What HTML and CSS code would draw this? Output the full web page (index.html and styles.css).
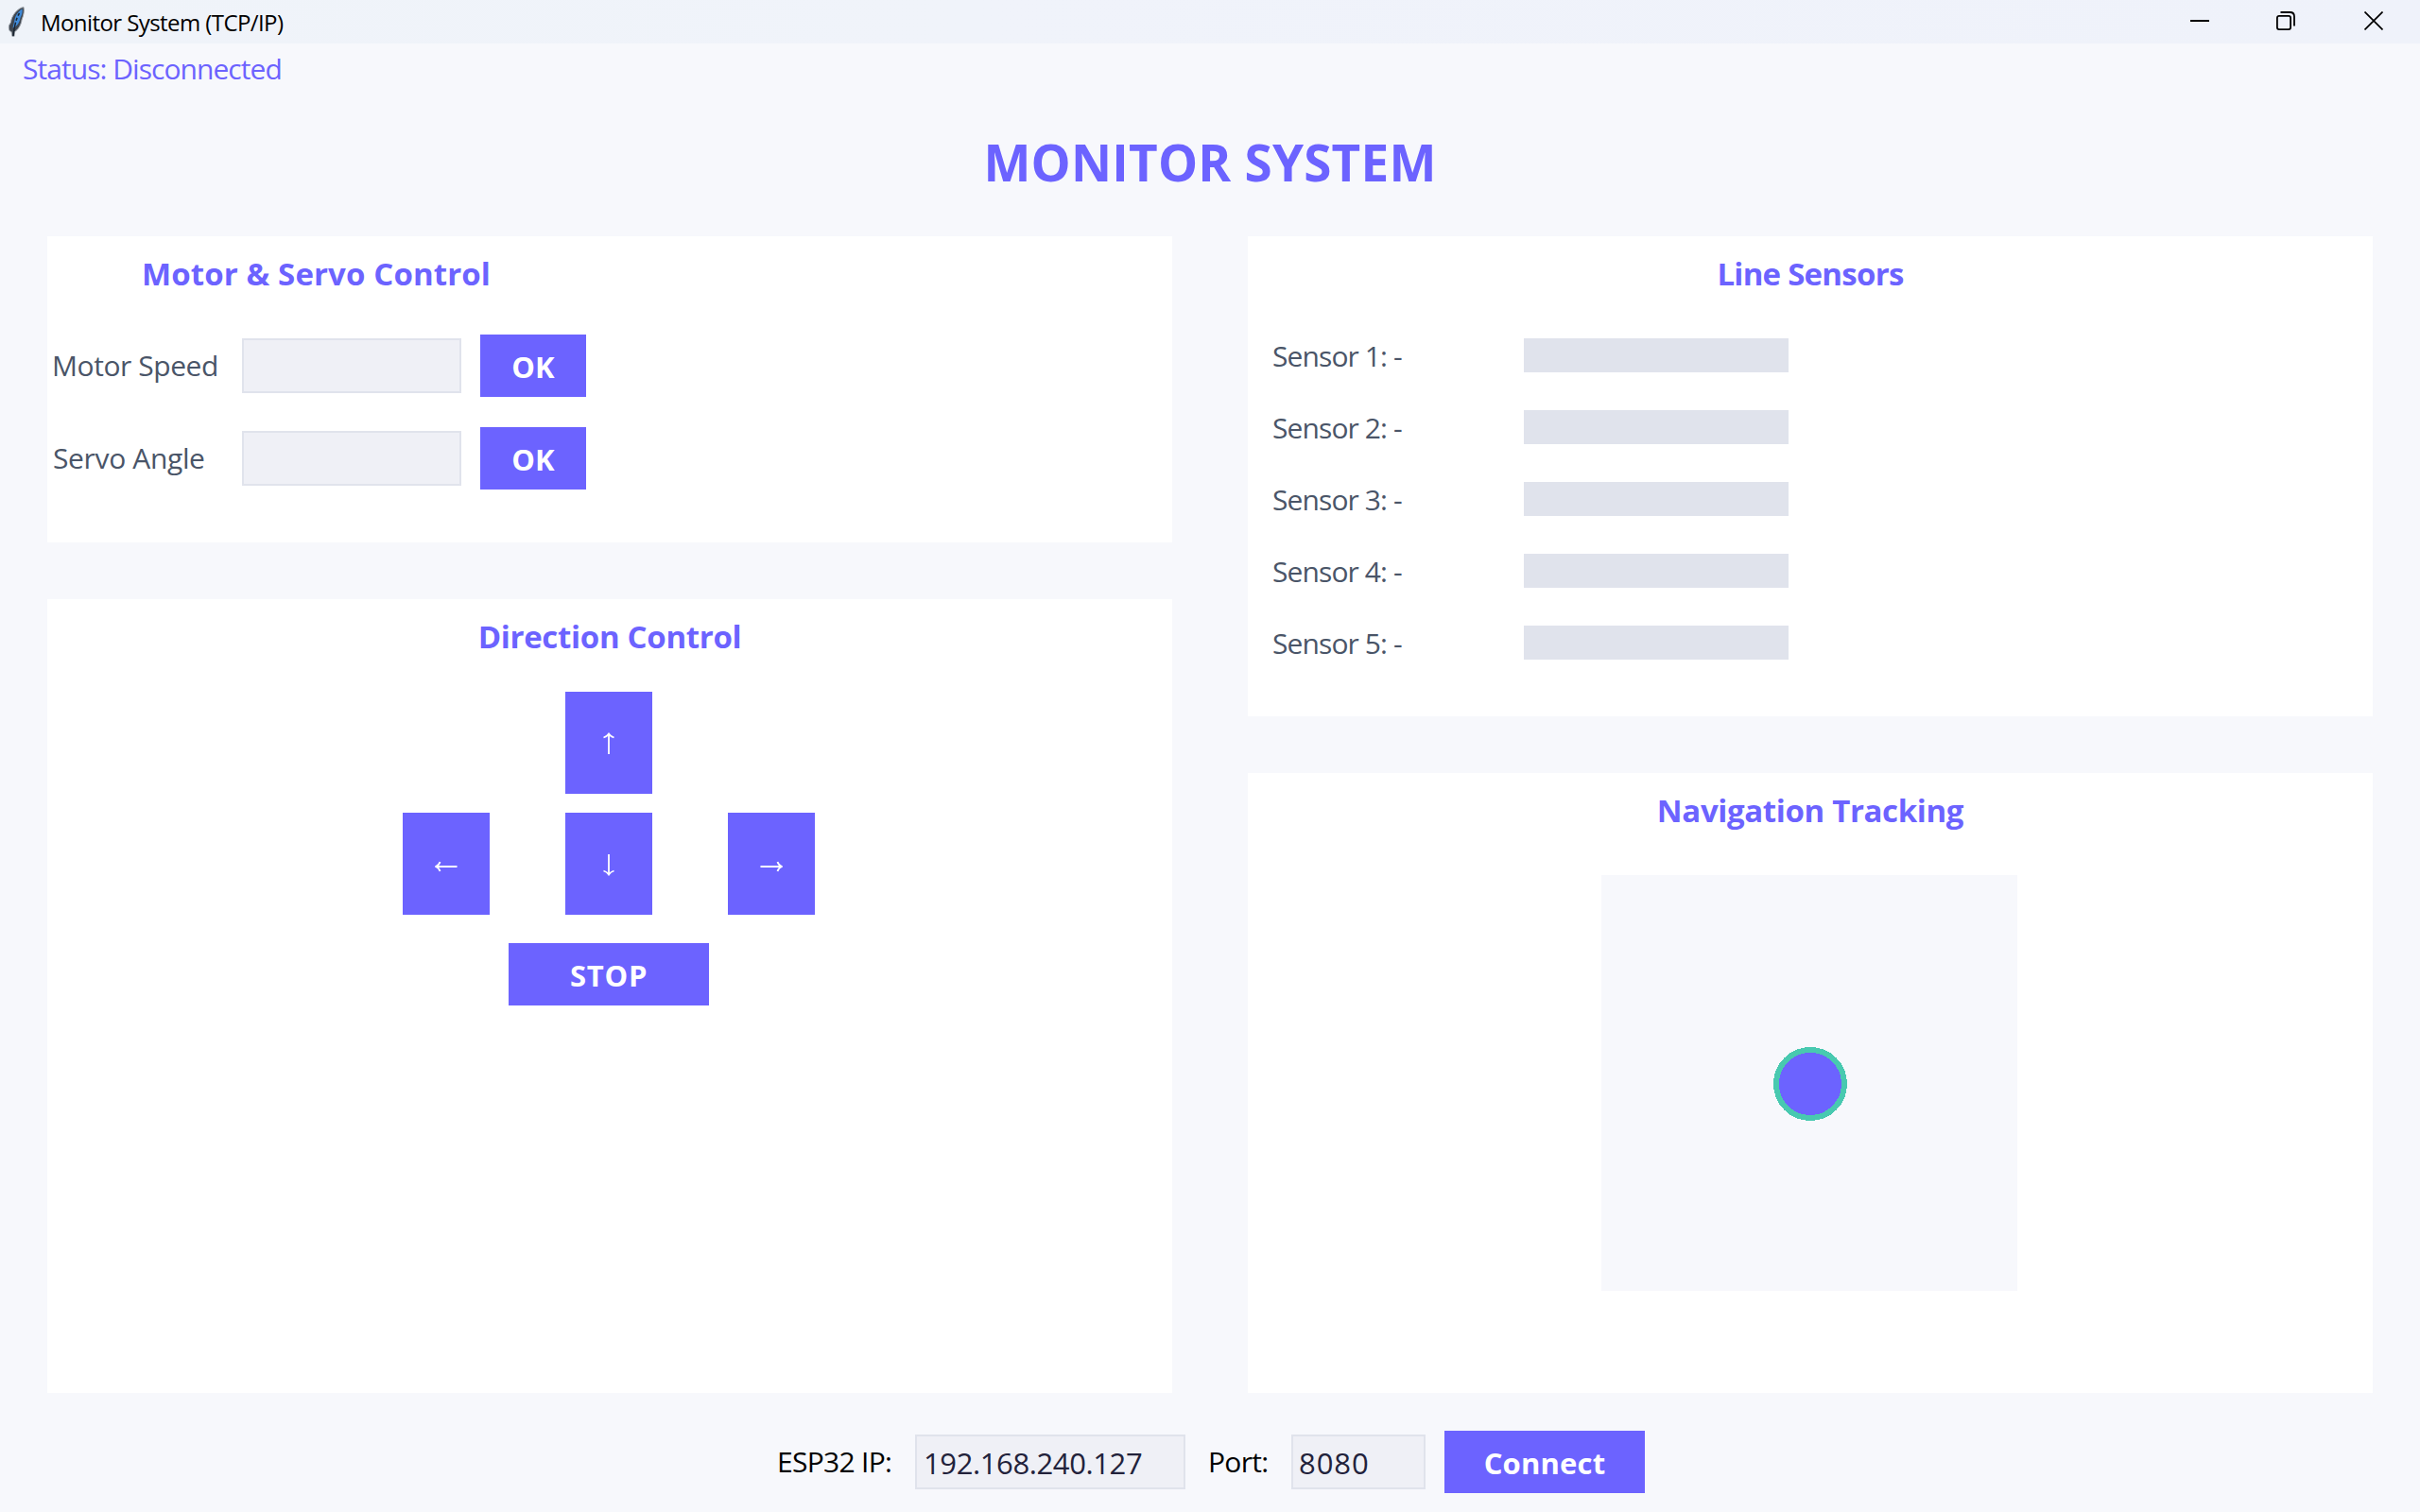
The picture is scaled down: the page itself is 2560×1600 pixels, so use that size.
FILE: index.html
```
<!DOCTYPE html>
<html lang="en">
<head>
<meta charset="utf-8">
<title>Monitor System (TCP/IP)</title>
<link rel="stylesheet" href="styles.css">
</head>
<body>
<header class="titlebar">
  <svg class="feather" width="20" height="34" viewBox="0 0 20 34">
    <path d="M17 1.500C10.500 2.500 4 11 3.500 17.500L1.500 21C1 25 2 27.500 4 27.500L5 32.500H7L7.500 27.500C11 26 14.500 20 15 15C17 10 18 5 17 1.500Z" fill="#3f4650" stroke="#a0a6ad" stroke-width="1"/>
    <path d="M15.500 3.500C11 6 8 11 7.500 15L5.500 23.500C10 22.500 13 17 13.500 13C15.500 9 16 6 15.500 3.500Z" fill="#3f8ad8"/>
    <path d="M12.500 8C9.500 13 7.500 19 6 32" fill="none" stroke="#1a2430" stroke-width="1.500" stroke-dasharray="3 2.500 3 2 30"/>
  </svg>
  <span class="window-name">Monitor System (TCP/IP)</span>
  <div class="window-buttons">
    <svg width="20" height="20" viewBox="0 0 20 20"><path d="M0 10H20" stroke="#000" stroke-width="2"/></svg>
    <svg class="restore" width="20" height="20" viewBox="0 0 20 20" fill="none" stroke="#000" stroke-width="1.800"><rect x=".9" y="4.900" width="14.200" height="14.200" rx="2"/><path d="M4.500 1H14.500Q19 1 19 5.500V15.500"/></svg>
    <svg width="20" height="20" viewBox="0 0 20 20"><path d="M.5.5L19.500 19.500M19.500.5L.5 19.500" stroke="#000" stroke-width="1.700"/></svg>
  </div>
</header>
<div class="status">Status: Disconnected</div>
<h1 class="page-title">MONITOR SYSTEM</h1>
<main class="board">
  <div class="column">
    <section class="card card-motor">
      <h2 class="card-title title-motor">Motor &amp; Servo Control</h2>
      <div class="controls">
        <label class="control-label label-speed">Motor Speed</label><div class="field"></div><button class="btn">OK</button>
        <label class="control-label label-angle">Servo Angle</label><div class="field"></div><button class="btn">OK</button>
      </div>
    </section>
    <section class="card card-fill">
      <h2 class="card-title title-direction">Direction Control</h2>
      <div class="pad">
        <button class="btn arrow up"><svg width="14" height="24" viewBox="0 0 14 24"><path d="M7 23V2M1.500 5.500Q5 4.500 7 1.500Q9 4.500 12.500 5.500"/></svg></button>
        <button class="btn arrow left"><svg width="24" height="14" viewBox="0 0 24 14"><path d="M23.500 7H2M5.500 2Q4.500 5.500 1 7Q4.500 8.500 5.500 12"/></svg></button>
        <button class="btn arrow down"><svg width="14" height="24" viewBox="0 0 14 24"><path d="M7 1V22M1.500 18.500Q5 19.500 7 22.500Q9 19.500 12.500 18.500"/></svg></button>
        <button class="btn arrow right"><svg width="24" height="14" viewBox="0 0 24 14"><path d="M.5 7H22M18.500 2Q19.500 5.500 23 7Q19.500 8.500 18.500 12"/></svg></button>
      </div>
      <button class="btn stop">STOP</button>
    </section>
  </div>
  <div class="column">
    <section class="card card-sensors">
      <h2 class="card-title title-sensors">Line Sensors</h2>
      <div class="sensors">
        <span class="sensor-name">Sensor 1: -</span><div class="bar"></div>
        <span class="sensor-name">Sensor 2: -</span><div class="bar"></div>
        <span class="sensor-name">Sensor 3: -</span><div class="bar"></div>
        <span class="sensor-name">Sensor 4: -</span><div class="bar"></div>
        <span class="sensor-name">Sensor 5: -</span><div class="bar"></div>
      </div>
    </section>
    <section class="card card-fill">
      <h2 class="card-title title-nav">Navigation Tracking</h2>
      <div class="map">
        <svg width="440" height="440" viewBox="0 0 440 440"><circle cx="221" cy="221" r="36" fill="#6c63ff" stroke="#48c9b0" stroke-width="6" shape-rendering="crispEdges"/></svg>
      </div>
    </section>
  </div>
</main>
<footer class="connection">
  <label class="conn-label label-ip">ESP32 IP:</label>
  <div class="field field-ip">192.168.240.127</div>
  <label class="conn-label label-port">Port:</label>
  <div class="field field-port">8080</div>
  <button class="btn connect">Connect</button>
</footer>
</body>
</html>
```
FILE: styles.css
```
* { box-sizing: border-box; }
body {
  margin: 0;
  width: 2560px;
  height: 1600px;
  display: flex;
  flex-direction: column;
  background: #f7f8fc;
  font-family: "Open Sans", "Noto Sans", sans-serif;
  font-size: 30px;
  font-weight: 400;
  color: #000;
  white-space: nowrap;
  overflow: hidden;
}
.titlebar {
  height: 46px;
  display: flex;
  align-items: center;
  background: linear-gradient(90deg, #eff3f9, #f0f3fa 40%, #eff2fa);
}
.feather { margin-left: 8px; }
.window-name {
  margin-left: 15px;
  font-size: 24px;
  letter-spacing: -0.58px;
}
.window-buttons {
  display: flex;
  gap: 72px;
  margin-left: auto;
  margin-right: 39px;
  padding-bottom: 2px;
}
.window-buttons svg { display: block; }
.window-buttons .restore { margin: 0 1px 0 -1px; }
.status {
  height: 52px;
  line-height: 53px;
  padding-left: 24px;
  color: #6c63ff;
  letter-spacing: -0.95px;
}
.page-title {
  margin: 0 0 4px;
  line-height: 148px;
  font-size: 53px;
  font-weight: 700;
  letter-spacing: 0.21px;
  text-align: center;
  color: #6c63ff;
}
.board {
  height: 1224px;
  padding: 0 50px;
  display: grid;
  grid-template-columns: 1fr 1fr;
  gap: 80px;
}
.column { display: flex; flex-direction: column; gap: 60px; }
.card { background: #fff; display: flex; flex-direction: column; align-items: center; }
.card-motor { height: 324px; align-items: flex-start; }
.card-sensors { height: 508px; }
.card-fill { flex: 1; }
.card-title {
  margin: 0;
  height: 78px;
  line-height: 80px;
  font-size: 33px;
  font-weight: 700;
  color: #6c63ff;
}
.title-motor { width: 569px; text-align: center; letter-spacing: 0.12px; }
.title-direction { letter-spacing: -0.31px; }
.title-sensors { letter-spacing: -0.74px; }
.title-nav { letter-spacing: -0.36px; }
.controls {
  margin-top: 26px;
  display: grid;
  grid-template-columns: 206px 232px 112px;
  row-gap: 32px;
  align-items: center;
}
.controls .btn { margin-left: 20px; }
.control-label { padding: 0 0 1px 5px; color: #4a5568; }
.label-speed { letter-spacing: -0.43px; }
.label-angle { padding-left: 6px; letter-spacing: -0.35px; }
.field {
  height: 58px;
  border: 2px solid #e0e3ec;
  background: #eff0f6;
  color: #22223b;
  font-size: 31px;
}
.btn {
  border: 0;
  width: 112px;
  height: 66px;
  padding: 2px 0 0;
  background: #6c63ff;
  color: #fff;
  font: 700 31px "Open Sans", "Noto Sans", sans-serif;
}
.pad {
  margin: 20px 2px 0 0;
  display: grid;
  grid-template-columns: repeat(3, 92px);
  gap: 20px 80px;
}
.arrow { width: 92px; height: 108px; padding: 2px 0 0; display: flex; align-items: center; justify-content: center; }
.arrow svg { fill: none; stroke: #fff; stroke-width: 1.8px; }
.up { grid-column: 2; }
.left { grid-column: 1; }
.left, .right { padding-top: 6px; }
.stop { width: 212px; margin: 30px 2px 0 0; letter-spacing: 0.77px; }
.sensors {
  width: 100%;
  margin-top: 30px;
  padding-left: 26px;
  display: grid;
  grid-template-columns: 266px 280px;
  grid-auto-rows: 36px;
  row-gap: 40px;
}
.sensor-name { line-height: 37px; height: 36px; color: #4a5568; letter-spacing: -0.9px; }
.bar { background: #e0e3ec; }
.map { width: 440px; height: 440px; margin: 30px 2px 0 0; background: #f7f8fc; }
.map svg { display: block; }
.connection {
  flex: 1;
  padding: 20px 0 0 2px;
  display: flex;
  align-items: center;
  justify-content: center;
}
.conn-label { padding-bottom: 1px; }
.label-ip { width: 146px; letter-spacing: -0.7px; }
.label-port { width: 88px; margin-left: 24px; letter-spacing: -0.7px; }
.connection .field { line-height: 56px; padding-left: 7px; }
.field-ip { width: 286px; letter-spacing: -0.39px; }
.field-port { width: 142px; letter-spacing: 0.94px; }
.connection .field-port { padding-left: 6px; }
.connect { width: 212px; margin-left: 20px; letter-spacing: 0.18px; }
```
